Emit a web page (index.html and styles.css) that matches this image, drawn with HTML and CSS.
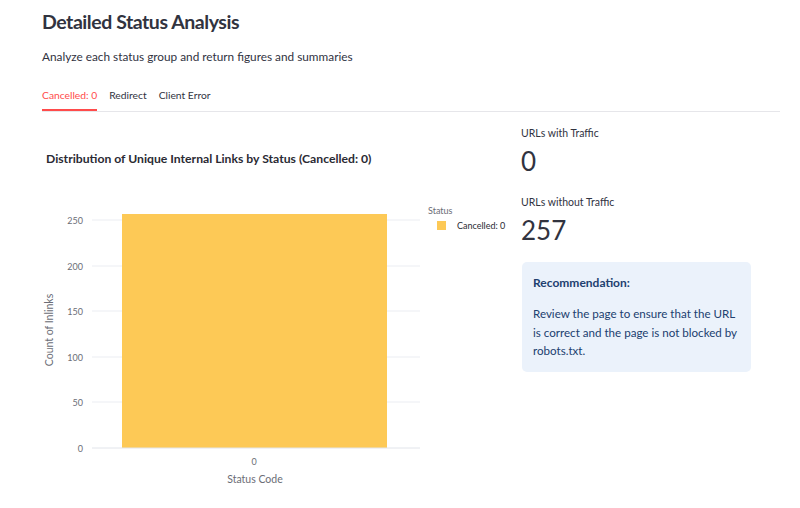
FILE: index.html
```html
<!DOCTYPE html>
<html>
<head>
<meta charset="utf-8">
<link rel="stylesheet" href="styles.css">
</head>
<body>
<div class="page">
  <h1 class="title">Detailed Status Analysis</h1>
  <p class="subtitle">Analyze each status group and return figures and summaries</p>
  <div class="tabs">
    <div class="tab active">Cancelled: 0</div>
    <div class="tab">Redirect</div>
    <div class="tab">Client Error</div>
  </div>
  <div class="content">
    <div class="chart-col">
      <svg class="chart" width="470" height="362" viewBox="0 0 470 362">
        <text class="chart-title" x="4" y="33">Distribution of Unique Internal Links by Status (Cancelled: 0)</text>
        <g class="grid">
          <line x1="50" x2="378" y1="90" y2="90"/>
          <line x1="50" x2="378" y1="136" y2="136"/>
          <line x1="50" x2="378" y1="181" y2="181"/>
          <line x1="50" x2="378" y1="227" y2="227"/>
          <line x1="50" x2="378" y1="272" y2="272"/>
        </g>
        <rect class="bar" x="80" y="84" width="265" height="234"/>
        <line class="zero" x1="50" x2="378" y1="318" y2="318"/>
        <g class="tick">
          <text x="41" y="94">250</text>
          <text x="41" y="140">200</text>
          <text x="41" y="185">150</text>
          <text x="41" y="231">100</text>
          <text x="41" y="276">50</text>
          <text x="41" y="322">0</text>
        </g>
        <text class="xtick" x="212" y="335">0</text>
        <text class="axis-title" x="213" y="353">Status Code</text>
        <text class="axis-title" transform="translate(11 200) rotate(-90)" x="0" y="0">Count of Inlinks</text>
        <text class="legend-title" x="386" y="84">Status</text>
        <rect class="bar" x="395" y="91" width="9" height="9"/>
        <text class="legend-item" x="415" y="99">Cancelled: 0</text>
      </svg>
    </div>
    <div class="side-col">
      <div class="metric">
        <div class="metric-label">URLs with Traffic</div>
        <div class="metric-value">0</div>
      </div>
      <div class="metric">
        <div class="metric-label">URLs without Traffic</div>
        <div class="metric-value">257</div>
      </div>
      <div class="info">
        <div class="info-head">Recommendation:</div>
        <p class="info-text">Review the page to ensure that the URL is correct and the page is not blocked by robots.txt.</p>
      </div>
    </div>
  </div>
</div>
</body>
</html>
```

FILE: styles.css
```css
html, body {
  margin: 0;
  padding: 0;
  background: #ffffff;
}
body {
  font-family: Lato, "Noto Sans", sans-serif;
  color: #31333f;
}
.page {
  padding: 8px 20px 0 42px;
}
.title {
  margin: 0;
  font-size: 19.5px;
  font-weight: 700;
  letter-spacing: -0.45px;
  line-height: 28px;
  color: #31333f;
}
.subtitle {
  margin: 12px 0 0;
  font-size: 11.8px;
  line-height: 18px;
  color: #31333f;
}
.tabs {
  margin-top: 20px;
  display: flex;
  gap: 12px;
  border-bottom: 1px solid #e6e6ea;
  width: 738px;
}
.tab {
  font-size: 10.3px;
  line-height: 14px;
  padding: 2px 0 9px;
  color: #31333f;
}
.tab.active {
  color: #ff4b4b;
  box-shadow: inset 0 -2px 0 #ff4b4b;
}
.content {
  display: flex;
  margin-top: 14px;
}
.chart-col {
  width: 479px;
  flex: none;
  padding-top: 4px;
}
.chart {
  display: block;
  font-family: Lato, "Noto Sans", sans-serif;
}
.chart-title {
  font-size: 12.2px;
  font-weight: 700;
  fill: #2a2a33;
}
.grid line {
  stroke: #ebedf2;
  stroke-width: 1;
}
.zero {
  stroke: #e1e4ea;
  stroke-width: 1;
}
.bar {
  fill: #fdc956;
}
.tick text {
  font-size: 9px;
  fill: #6b6d76;
  text-anchor: end;
}
.xtick {
  font-size: 9px;
  fill: #6b6d76;
  text-anchor: middle;
}
.axis-title {
  font-size: 10.5px;
  fill: #6b6d76;
  text-anchor: middle;
}
.legend-title {
  font-size: 9px;
  fill: #6b6d76;
}
.legend-item {
  font-size: 9px;
  fill: #2a2a33;
}
.side-col {
  width: 230px;
  display: flex;
  flex-direction: column;
}
.metric-label {
  font-size: 10.5px;
  line-height: 14px;
  color: #31333f;
}
.metric-value {
  font-size: 26px;
  line-height: 32px;
  margin-top: 5px;
  color: #31333f;
}
.metric + .metric {
  margin-top: 18px;
}
.info {
  margin-top: 16px;
  margin-left: 1px;
  background: #ebf2fb;
  border-radius: 5px;
  padding: 13px 10px 11px 11px;
  color: #21406f;
}
.info-head {
  font-size: 12px;
  font-weight: 700;
  line-height: 16px;
}
.info-text {
  margin: 14px 0 0;
  font-size: 11.6px;
  line-height: 18.5px;
}
```
